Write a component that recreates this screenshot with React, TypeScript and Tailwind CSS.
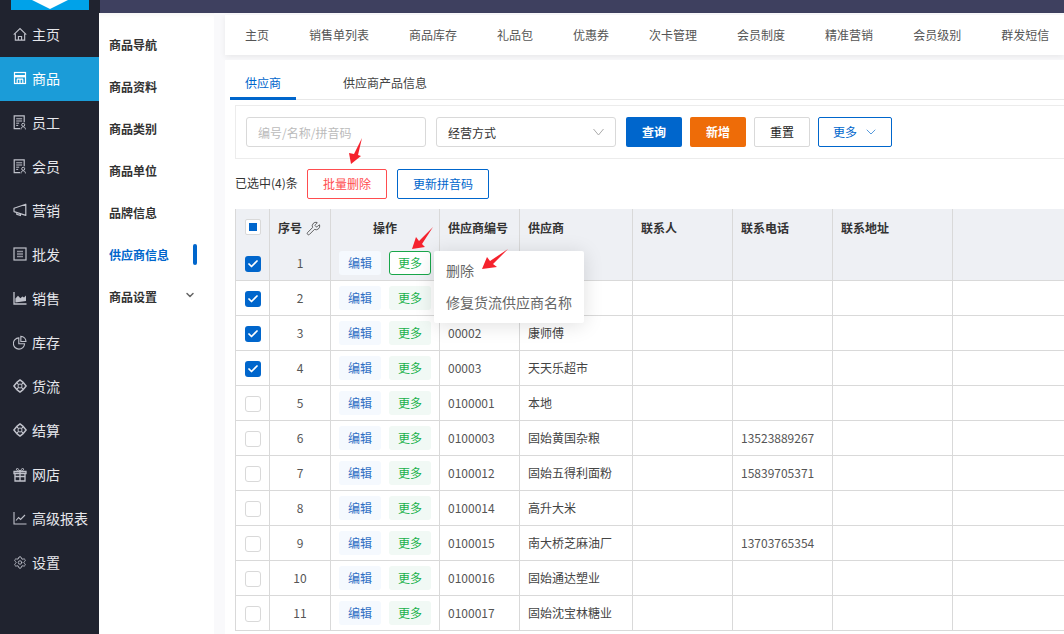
import React from "react";
import { ChevronDown, Wrench, Settings, Check } from "lucide-react";

function HomeIcon() {
  return (
    <svg width="15" height="15" viewBox="0 0 15 15" fill="none" stroke="currentColor" strokeWidth="1.2">
      <path d="M.8 7.6L7.5 1.2l6.7 6.4" />
      <path d="M2.5 6.5v7h10v-7" />
      <path d="M5.8 13.5V9.6h3.4v3.9" />
    </svg>
  );
}
function StoreIcon() {
  return (
    <svg width="14" height="14" viewBox="0 0 14 14" fill="none" stroke="currentColor" strokeWidth="1.2">
      <rect x="1.5" y="1.5" width="11" height="11" />
      <path d="M1 5.2h12" strokeWidth="2.4" />
      <path d="M4 8.2h6M4.2 8.2v4.5M9.8 8.2v4.5M7 8.2v4.5" />
    </svg>
  );
}
function DocUser() {
  return (
    <svg width="14" height="15" viewBox="0 0 14 15" fill="none" stroke="currentColor" strokeWidth="1.2">
      <path d="M7 13.6H1.2V.8h10v6.4" />
      <path d="M3.2 3.8h6M3.2 6h6M3.2 8.2h3M3.2 10.4h2" strokeWidth="1" />
      <circle cx="10.2" cy="9.8" r="1.5" strokeWidth="1" />
      <path d="M8 14.4c0-1.7.9-2.6 2.2-2.6s2.2.9 2.2 2.6" strokeWidth="1" />
    </svg>
  );
}
function HornIcon() {
  return (
    <svg width="14" height="14" viewBox="0 0 14 14" fill="none" stroke="currentColor" strokeWidth="1.2">
      <path d="M1 5.2L12.8 1.2V12.4L1 8.6Z" strokeLinejoin="round" />
      <path d="M3.8 9.6v1.8l3.6 1v-1.7" />
    </svg>
  );
}
function ListBox() {
  return (
    <svg width="14" height="14" viewBox="0 0 14 14" fill="none" stroke="currentColor" strokeWidth="1.2">
      <rect x="1" y="1" width="12" height="12" />
      <path d="M4 4.5h6M4 7h6M4 9.5h6" strokeWidth="1.5" opacity="0.7" />
    </svg>
  );
}
function AreaIcon() {
  return (
    <svg width="14" height="14" viewBox="0 0 14 14" fill="none">
      <path d="M1 1v12h12.5" stroke="currentColor" strokeWidth="1.3" />
      <path d="M2.4 11.6V7.5L5 4.8l2.4 2.4 2-1.6 1.6 1 2-2v5.5z" fill="currentColor" />
    </svg>
  );
}
function PieIcon() {
  return (
    <svg width="15" height="15" viewBox="0 0 15 15" fill="none" stroke="currentColor" strokeWidth="1.2">
      <path d="M6.2 2.6a6 6 0 1 0 6.2 6.2H6.2z" />
      <path d="M8.4 1v5.4h5.5A5.6 5.6 0 0 0 8.4 1z" />
    </svg>
  );
}
function Hub() {
  return (
    <svg width="14" height="14" viewBox="0 0 14 14" fill="none" stroke="currentColor">
      <path d="M7 .9L9.8 3.1 13.1 7 9.8 10.9 7 13.1 4.2 10.9.9 7 4.2 3.1z" strokeLinejoin="round" strokeWidth="1.5" />
      <circle cx="7" cy="7" r="2" strokeWidth="1" />
      <path d="M4 4l1.6 1.6M10 4L8.4 5.6M4 10l1.6-1.6M10 10L8.4 8.4" strokeWidth="1.2" />
    </svg>
  );
}
function GiftIcon() {
  return (
    <svg width="14" height="15" viewBox="0 0 14 15" fill="none" stroke="currentColor" strokeWidth="1.3">
      <path d="M2 6.5v7.5h10V6.5" />
      <path d="M1 4.5h12v2H1zM7 4.5V14M1.8 9.5h10.4" />
      <path d="M7 4C5.5 1.5 3.5.8 3.4 2.2 3.3 3.6 5 4 7 4zM7 4c1.5-2.5 3.5-3.2 3.6-1.8.1 1.4-1.6 1.8-3.6 1.8z" strokeWidth="1" />
    </svg>
  );
}
function LineIcon() {
  return (
    <svg width="14" height="14" viewBox="0 0 14 14" fill="none" stroke="currentColor" strokeWidth="1.1">
      <path d="M1 1v12h12.5" />
      <path d="M3 9.5l2.6-3 2 2 4.4-4.5" />
    </svg>
  );
}

const nav: [string, React.ReactNode, boolean?][] = [
  ["主页", <HomeIcon />],
  ["商品", <StoreIcon />, true],
  ["员工", <DocUser />],
  ["会员", <DocUser />],
  ["营销", <HornIcon />],
  ["批发", <ListBox />],
  ["销售", <AreaIcon />],
  ["库存", <PieIcon />],
  ["货流", <Hub />],
  ["结算", <Hub />],
  ["网店", <GiftIcon />],
  ["高级报表", <LineIcon />],
  ["设置", <Settings size={15} strokeWidth={1.5} />],
];

const sub = ["商品导航", "商品资料", "商品类别", "商品单位", "品牌信息", "供应商信息", "商品设置"];
const topTabs = ["主页", "销售单列表", "商品库存", "礼品包", "优惠券", "次卡管理", "会员制度", "精准营销", "会员级别", "群发短信"];

const rows: [string, string, string][] = [
  ["", "", ""],
  ["", "", ""],
  ["00002", "康师傅", ""],
  ["00003", "天天乐超市", ""],
  ["0100001", "本地", ""],
  ["0100003", "固始黄国杂粮", "13523889267"],
  ["0100012", "固始五得利面粉", "15839705371"],
  ["0100014", "高升大米", ""],
  ["0100015", "南大桥芝麻油厂", "13703765354"],
  ["0100016", "固始通达塑业", ""],
  ["0100017", "固始沈宝林糖业", ""],
];

function CheckBox({ on }: { on: boolean }) {
  return on ? (
    <span className="flex h-4 w-4 items-center justify-center rounded-[3px] bg-[#0066cc] text-white">
      <Check size={12} strokeWidth={3.5} />
    </span>
  ) : (
    <span className="block h-4 w-4 rounded-[3px] border border-[#d9d9d9] bg-white" />
  );
}

function Arrow({ points, className }: { points: string; className: string }) {
  return (
    <svg className={`pointer-events-none absolute ${className}`} width="40" height="40" viewBox="0 0 40 40">
      <polygon points={points} fill="#f5222d" />
    </svg>
  );
}

export default function App() {
  const th = "border-r-[1px] border-[#d9d9d9] align-top pt-[10px] font-bold text-[#333] text-left pl-[8px] h-[37px]";
  return (
    <div className="relative flex h-[634px] w-[1064px] overflow-hidden bg-white text-[12px] text-[#333] [font-family:'Noto_Sans_CJK_SC','Noto_Sans',sans-serif]">
      <aside className="w-[99px] shrink-0 bg-[#20232f]">
        <div className="mx-[11px] flex h-[10px] w-[78px] justify-center overflow-hidden bg-[#00a2e9]">
          <div className="h-0 w-0 border-x-[18px] border-t-[9px] border-x-transparent border-t-white" />
        </div>
        <div className="mt-[3px]">
          {nav.map(([label, icon, active]) => (
            <div key={label} className={`flex h-[44px] items-center gap-[5px] pb-[2px] pl-[13px] text-[14px] ${active ? "bg-[#1b9cd8] text-white" : "text-[#e6e7ec]"}`}>
              <span className={`flex w-[14px] justify-center ${active ? "text-white" : "text-[#c0c2cb]"}`}>{icon}</span>
              <span className="whitespace-nowrap">{label}</span>
            </div>
          ))}
        </div>
      </aside>
      <div className="flex min-w-0 flex-1 flex-col">
        <div className="h-[13px] shrink-0 border-l border-[#20232f] bg-[#3e405f]" />
        <div className="flex min-h-0 flex-1">
          <nav className="w-[115px] shrink-0 bg-white pl-[10px] pt-[11px] shadow-[inset_0_6px_6px_-6px_rgba(0,0,0,0.08)]">
            {sub.map((s, i) => (
              <div key={s} className={`relative flex h-[42px] items-center font-bold ${i === 5 ? "text-[#0066cc]" : "text-[#333]"}`}>
                {s}
                {i === 5 && <span className="absolute left-[84px] top-[10px] h-[21px] w-[4px] rounded-[2px] bg-[#0066cc]" />}
                {i === 6 && <ChevronDown size={12} strokeWidth={3} className="absolute left-[75px] top-[13px] text-[#666]" />}
              </div>
            ))}
          </nav>
          <div className="min-w-0 flex-1 bg-[#f9f9fb] pl-[11px] pt-[2px]">
            <div className="flex h-[40px] items-center gap-[40px] whitespace-nowrap bg-white pl-[20px] text-[#555] shadow-[0_2px_6px_rgba(0,0,0,0.07)]">
              {topTabs.map((t) => (
                <span key={t}>{t}</span>
              ))}
            </div>
            <div className="mt-[5px] h-[574px] overflow-hidden bg-white pl-[5px] pt-[5px]">
              <div className="flex h-[35px] items-start border-b border-[#e8e8e8]">
                <span className="h-[35px] border-b-[3px] border-[#0066cc] px-[15px] pt-[9px] text-[#0066cc]">供应商</span>
                <span className="ml-[32px] px-[15px] pt-[9px] text-[#444]">供应商产品信息</span>
              </div>
              <div className="ml-[5px] mt-[5px] flex h-[54px] items-center gap-[10px] border-y border-l border-[#ececec] pl-[10px]">
                <div className="flex h-[30px] w-[180px] items-center rounded-[3px] border border-[#d9d9d9] pl-[11px] pt-[2px] text-[#bbb]">编号/名称/拼音码</div>
                <div className="flex h-[30px] w-[180px] items-center justify-between rounded-[3px] border border-[#d9d9d9] pl-[11px] pr-[11px] text-[#333]">
                  <span className="pt-[2px]">经营方式</span>
                  <svg width="11" height="8" viewBox="0 0 11 8" fill="none" stroke="#aaa" strokeWidth="1">
                    <path d="M.5 1l5 6 5-6" />
                  </svg>
                </div>
                <button className="h-[30px] w-[56px] rounded-[2px] bg-[#0066cc] font-bold text-white">查询</button>
                <button className="-ml-[2px] h-[30px] w-[56px] rounded-[2px] bg-[#ee6c08] font-bold text-white">新增</button>
                <button className="-ml-[2px] h-[30px] w-[56px] rounded-[2px] border border-[#d9d9d9] bg-white text-[#222]">重置</button>
                <button className="-ml-[2px] flex h-[30px] w-[74px] items-center justify-center gap-[6px] rounded-[2px] border border-[#0066cc] bg-white pl-[2px] text-[#0066cc]">
                  更多 <ChevronDown size={16} strokeWidth={1} />
                </button>
              </div>
              <div className="ml-[5px] mt-[10px] flex h-[30px] items-center">
                <span className="w-[72px] pb-[2px]">已选中(4)条</span>
                <button className="h-[30px] w-[80px] rounded-[2px] border border-[#ff4d4f] text-[#ff4d4f]">批量删除</button>
                <button className="ml-[10px] h-[30px] w-[92px] rounded-[2px] border border-[#0066cc] text-[#0066cc]">更新拼音码</button>
              </div>
              <table className="ml-[5px] mt-[10px] w-[900px] table-fixed border-collapse border-l border-[#d9d9d9]">
                <colgroup>
                  <col className="w-[34px]" />
                  <col className="w-[61px]" />
                  <col className="w-[109px]" />
                  <col className="w-[80px]" />
                  <col className="w-[113px]" />
                  <col className="w-[100px]" />
                  <col className="w-[100px]" />
                  <col className="w-[120px]" />
                  <col />
                </colgroup>
                <thead>
                  <tr className="bg-[#eef0f4]">
                    <th className="border-r border-[#d9d9d9] pt-[10px] align-top">
                      <span className="ml-[9px] flex h-4 w-4 items-center justify-center rounded-[2px] border border-[#d9d9d9] bg-white">
                        <span className="block h-2 w-2 bg-[#0066cc]" />
                      </span>
                    </th>
                    <th className={th}>
                      <span className="flex items-center gap-[4px]">
                        序号 <Wrench size={15} strokeWidth={1.2} className="text-[#333]" />
                      </span>
                    </th>
                    <th className={`${th} !pl-0 !text-center`}>操作</th>
                    <th className={th}>供应商编号</th>
                    <th className={th}>供应商</th>
                    <th className={th}>联系人</th>
                    <th className={th}>联系电话</th>
                    <th className={th}>联系地址</th>
                    <th />
                  </tr>
                </thead>
                <tbody>
                  {rows.map((r, i) => (
                    <tr key={i} className={`border-b border-[#d9d9d9] ${i === 0 ? "h-[34px] bg-[#eef0f4]" : "h-[35px] bg-white"}`}>
                      <td className="border-r border-[#d9d9d9]">
                        <span className="ml-[9px] flex pt-[2px]">
                          <CheckBox on={i < 4} />
                        </span>
                      </td>
                      <td className="border-r border-[#d9d9d9] text-center text-[#555]">{i + 1}</td>
                      <td className="border-r border-[#d9d9d9] pl-[8px]">
                        <div className="flex gap-[8px]">
                          <span className="flex h-[24px] w-[42px] items-center justify-center rounded-[3px] bg-[#f5f9fe] text-[#2f6fc4]">编辑</span>
                          <span className={`flex h-[24px] w-[42px] items-center justify-center rounded-[3px] text-[#19b14c] ${i === 0 ? "border border-[#19a64a] bg-white" : "bg-[#f1f9f5]"}`}>更多</span>
                        </div>
                      </td>
                      <td className="border-r border-[#d9d9d9] pl-[8px] text-[#555]">{r[0]}</td>
                      <td className="border-r border-[#d9d9d9] pl-[8px] whitespace-nowrap text-[#444]">{r[1]}</td>
                      <td className="border-r border-[#d9d9d9]" />
                      <td className="border-r border-[#d9d9d9] pl-[8px] text-[#555]">{r[2]}</td>
                      <td className="border-r border-[#d9d9d9]" />
                      <td />
                    </tr>
                  ))}
                </tbody>
              </table>
            </div>
          </div>
        </div>
      </div>
      <div className="absolute left-[434px] top-[251px] w-[150px] rounded-[2px] bg-white py-[4px] text-[14px] text-[#666] shadow-[0_2px_20px_rgba(0,0,0,0.13)]">
        <div className="flex h-[32px] items-center pb-[2px] pl-[12px]">删除</div>
        <div className="flex h-[32px] items-center whitespace-nowrap pb-[2px] pl-[12px]">修复货流供应商名称</div>
      </div>
      <Arrow className="left-[340px] top-[135px]" points="11,29 9,18 14,19 22,3 18,20 21,21" />
      <Arrow className="left-[400px] top-[220px]" points="12,29 16,17 19,21 33,7 22,24 25,27" />
      <Arrow className="left-[475px] top-[240px]" points="7,29 12,17 15,21 33,9 18,24 22,27" />
    </div>
  );
}
